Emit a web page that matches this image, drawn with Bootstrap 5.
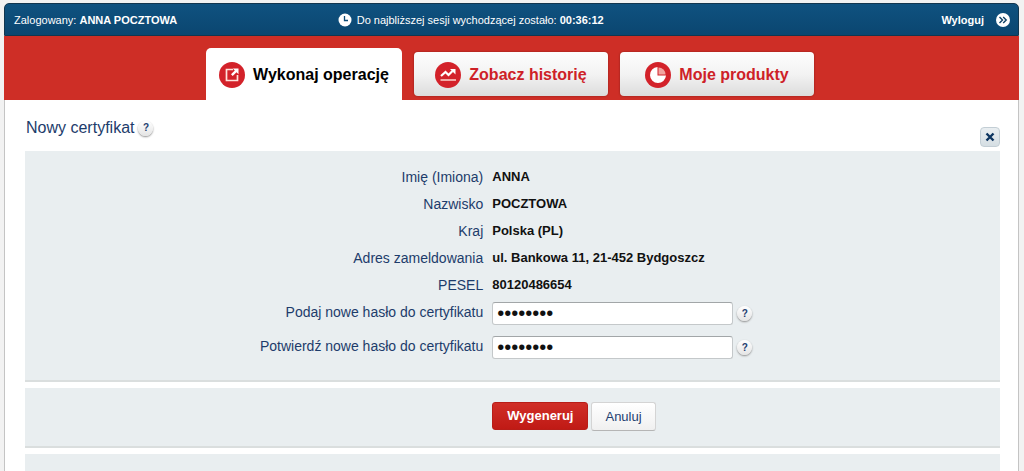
<!DOCTYPE html>
<html lang="pl">
<head>
<meta charset="utf-8">
<meta name="viewport" content="width=device-width, initial-scale=1">
<title>Nowy certyfikat</title>
<link rel="stylesheet" href="https://cdn.jsdelivr.net/npm/bootstrap@5.3.0/dist/css/bootstrap.min.css">
<style>
  body { background: #f2f2f2; font-family: "Liberation Sans", Arial, sans-serif; font-size: 14px; line-height: 20px; color: #1d3c6b; }
  .page-shell { margin: 3px 5px 0 4px; }
  .session-bar { height: 33px; padding: 0 8px 0 9px; font-size: 11px; color: #fff; background: linear-gradient(#0f5280, #0b4670); border: 1px solid #12364f; border-radius: 5px 5px 0 0; }
  .session-user { width: 32.5%; }
  .session-bar a { color: #fff; gap: 12px; }
  .tab-band { height: 64px; padding-right: 3px; gap: 12px; background: #ce2e26; }
  .tab-link { height: 44px; width: 194px; margin-bottom: 4px; padding-top: 2px; gap: 8px; font-size: 16px; font-weight: bold; color: #ce2127; border-radius: 4px; background: linear-gradient(#fdfdfd, #f3f3f3 50%, #dcdcdc); box-shadow: 0 0 2px #7d1d18; }
  .tab-link.active { height: 52px; width: 196px; margin-bottom: 0; color: #000; background: #fff; border-radius: 5px 5px 0 0; box-shadow: none; }
  .sheet { background: #fff; border: solid #c4c4c4; border-width: 0 1px; padding: 0 18px 0 20px; }
  .sheet-head { height: 51px; padding-left: 1px; }
  .sheet-head h1 { font-size: 16px; line-height: 20px; padding-top: 18px; gap: 4px; }
  .help-btn { width: 15px; height: 15px; font-size: 10px; line-height: 14px; font-weight: bold; color: #243f70; background: linear-gradient(#fff, #e4e4e4); border-radius: 50%; box-shadow: 0 1px 2px #8c8c8c; }
  .close-btn { width: 20px; height: 20px; margin-bottom: 4px; background: linear-gradient(#e9eef1, #d5dee3); border: 1px solid #c3ced5; border-radius: 4px; }
  .panel { background: #e9eef0; border-bottom: 2px solid #dadede; margin-bottom: 6px; }
  .panel-data { padding: 16px 0 10px; }
  .panel-actions { padding: 14px 0 15px; }
  .field { display: grid; grid-template-columns: 47% 1fr; column-gap: 9px; }
  .field-data { min-height: 27px; }
  .field-entry { min-height: 34px; }
  .field dt, .field label { font-weight: normal; text-align: right; }
  .field dd { margin: 0; font-size: 13px; line-height: 20px; font-weight: bold; color: #111; }
  .pass-input { width: 241px; height: 23px; padding: 0 4px; font: 20px "Liberation Sans", sans-serif; color: #111; border: 1px solid #c4c8ca; border-top-color: #a2a6a8; border-radius: 3px; }
  .act-set { gap: 3px; }
  .act-btn { height: 28px; padding: 0 13px; font-size: 13px; line-height: 26px; border-radius: 3px; }
  .act-main { padding: 0 14px; font-weight: bold; color: #fff; background: linear-gradient(#d02e27, #c01a15); border: 1px solid #b81d18; }
  .act-plain { height: 29px; color: #243f70; background: linear-gradient(#fff, #f0f0f0); border: 1px solid #d4d4d4; border-bottom-color: #b5b5b5; }
</style>
<script src="https://cdn.jsdelivr.net/npm/bootstrap@5.3.0/dist/js/bootstrap.bundle.min.js"></script>
</head>
<body>
<div class="min-vh-100 d-flex flex-column">
  <div class="page-shell flex-grow-1 d-flex flex-column">
    <header>
      <div class="session-bar d-flex align-items-center">
        <div class="session-user">Zalogowany: <b>ANNA POCZTOWA</b></div>
        <div class="d-flex align-items-center gap-1">
          <svg width="15" height="14" viewBox="1 0 15 14" aria-hidden="true"><circle cx="8" cy="7" r="6.500" fill="#fff"/><path d="M7.500 3v4.500H11" fill="none" stroke="#0d4b77" stroke-width="1.300"/></svg>
          <span>Do najbliższej sesji wychodzącej zostało: <b>00:36:12</b></span>
        </div>
        <div class="ms-auto">
          <a href="#" class="d-flex align-items-center text-decoration-none fw-bold">Wyloguj
            <svg width="14" height="14" viewBox="0 0 14 14" aria-hidden="true"><circle cx="7" cy="7" r="7" fill="#fff"/><path d="M3.500 4l3 3-3 3M7.200 4l3 3-3 3" fill="none" stroke="#0d3f63" stroke-width="1.400"/></svg>
          </a>
        </div>
      </div>
      <nav class="tab-band d-flex justify-content-center align-items-end">
        <a href="#" class="tab-link active d-flex align-items-center justify-content-center text-decoration-none" aria-current="page">
          <svg width="26" height="26" viewBox="0 0 26 26" aria-hidden="true"><circle cx="13" cy="13" r="13" fill="#d3222a"/><path d="M14 7.500H7.500v11h11V13" fill="none" stroke="#ffe2dc" stroke-width="1.700"/><path d="M13.800 6.500h5.700v5.700l-2-2-3.800 3.800-1.700-1.700 3.800-3.800z" fill="#fff"/></svg>
          <span>Wykonaj operację</span>
        </a>
        <a href="#" class="tab-link d-flex align-items-center justify-content-center text-decoration-none">
          <svg width="26" height="26" viewBox="0 0 26 26" aria-hidden="true"><circle cx="13" cy="13" r="13" fill="#d3222a"/><path d="M6 14l4.500-4 3 3 4-4" fill="none" stroke="#fff" stroke-width="2.200"/><path d="M15 7h5.500v5.500z" fill="#fff"/><path d="M5.500 18h15.500" stroke="#ffe2dc" stroke-width="1.400"/></svg>
          <span>Zobacz historię</span>
        </a>
        <a href="#" class="tab-link d-flex align-items-center justify-content-center text-decoration-none">
          <svg width="26" height="26" viewBox="0 0 26 26" aria-hidden="true"><circle cx="13" cy="13" r="13" fill="#d3222a"/><path d="M12.500 5A8 8 0 1 0 21 13.500H12.500z" fill="#fff"/><path d="M13.500 5.500A7 7 0 0 1 20.500 12.500H13.500z" fill="#f1a39f"/></svg>
          <span>Moje produkty</span>
        </a>
      </nav>
    </header>

    <main class="sheet flex-grow-1 d-flex flex-column">
      <div class="sheet-head d-flex justify-content-between">
        <h1 class="d-flex align-items-center align-self-start m-0 fw-normal">Nowy certyfikat
          <button type="button" class="help-btn border-0 p-0" aria-label="Pomoc">?</button></h1>
        <button type="button" class="close-btn p-0 d-flex align-items-center justify-content-center align-self-end" aria-label="Zamknij">
          <svg width="10" height="10" viewBox="0 0 10 10" aria-hidden="true"><path d="M1.500 1.500l7 7M8.500 1.500l-7 7" stroke="#0d3560" stroke-width="2.400"/></svg>
        </button>
      </div>

      <form class="d-flex flex-column flex-grow-1">
        <section class="panel panel-data">
          <dl class="m-0">
            <div class="field field-data"><dt>Imię (Imiona)</dt><dd>ANNA</dd></div>
            <div class="field field-data"><dt>Nazwisko</dt><dd>POCZTOWA</dd></div>
            <div class="field field-data"><dt>Kraj</dt><dd>Polska (PL)</dd></div>
            <div class="field field-data"><dt>Adres zameldowania</dt><dd>ul. Bankowa 11, 21-452 Bydgoszcz</dd></div>
            <div class="field field-data"><dt>PESEL</dt><dd>80120486654</dd></div>
          </dl>
          <div class="field field-entry">
            <label for="pass">Podaj nowe hasło do certyfikatu</label>
            <div class="d-flex align-items-center align-self-start gap-1">
              <input id="pass" class="pass-input" type="password" value="haslo123">
              <button type="button" class="help-btn border-0 p-0" aria-label="Pomoc: hasło">?</button>
            </div>
          </div>
          <div class="field field-entry">
            <label for="pass2">Potwierdź nowe hasło do certyfikatu</label>
            <div class="d-flex align-items-center align-self-start gap-1">
              <input id="pass2" class="pass-input" type="password" value="haslo123">
              <button type="button" class="help-btn border-0 p-0" aria-label="Pomoc: powtórzenie hasła">?</button>
            </div>
          </div>
        </section>
        <section class="panel panel-actions field">
          <div></div>
          <div class="act-set d-flex align-items-start">
            <button type="submit" class="act-btn act-main">Wygeneruj</button>
            <button type="button" class="act-btn act-plain">Anuluj</button>
          </div>
        </section>
        <section class="panel flex-grow-1 border-0 mb-0"></section>
      </form>
    </main>
  </div>
</div>
</body>
</html>
